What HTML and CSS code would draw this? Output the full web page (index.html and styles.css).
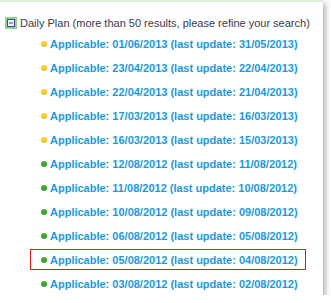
FILE: index.html
```html
<!DOCTYPE html>
<html lang="en">
<head>
  <meta charset="UTF-8">
  <title>Daily Plan</title>
  <link rel="stylesheet" href="styles.css">
</head>
<body>

<div class="panel">
  <div class="tree-head">
    <span class="toggle">
      <svg width="12" height="12" viewBox="0 0 12 12">
        <rect x="0" y="0" width="12" height="12" fill="#93d193"/>
        <rect x="2.5" y="2.5" width="7" height="7" fill="#eef0f8" stroke="#3b4a9c"/>
        <rect x="4" y="5.5" width="4" height="1" fill="#3b4a9c"/>
      </svg>
    </span>
    <span class="head-text">Daily Plan (more than 50 results, please refine your search)</span>
  </div>

  <ul class="plan-list">
    <li><span class="dot pending"></span><a href="#">Applicable: 01/06/2013 (last update: 31/05/2013)</a></li>
    <li><span class="dot pending"></span><a href="#">Applicable: 23/04/2013 (last update: 22/04/2013)</a></li>
    <li><span class="dot pending"></span><a href="#">Applicable: 22/04/2013 (last update: 21/04/2013)</a></li>
    <li><span class="dot pending"></span><a href="#">Applicable: 17/03/2013 (last update: 16/03/2013)</a></li>
    <li><span class="dot pending"></span><a href="#">Applicable: 16/03/2013 (last update: 15/03/2013)</a></li>
    <li><span class="dot done"></span><a href="#">Applicable: 12/08/2012 (last update: 11/08/2012)</a></li>
    <li><span class="dot done"></span><a href="#">Applicable: 11/08/2012 (last update: 10/08/2012)</a></li>
    <li><span class="dot done"></span><a href="#">Applicable: 10/08/2012 (last update: 09/08/2012)</a></li>
    <li><span class="dot done"></span><a href="#">Applicable: 06/08/2012 (last update: 05/08/2012)</a></li>
    <li class="selected"><span class="dot done"></span><a href="#">Applicable: 05/08/2012 (last update: 04/08/2012)</a></li>
    <li><span class="dot done"></span><a href="#">Applicable: 03/08/2012 (last update: 02/08/2012)</a></li>
  </ul>
</div>

</body>
</html>
```

FILE: styles.css
```css
body {
  margin: 0;
  background: #ffffff;
  font-family: "Liberation Sans", Arial, sans-serif;
}
.panel {
  width: 323px;
  height: 293px;
  border-top: 2px solid #dcefd9;
  background: #ffffff;
  box-shadow: 2px 3px 6px rgba(0, 0, 0, 0.35);
  box-sizing: content-box;
  overflow: hidden;
}
.tree-head {
  display: flex;
  align-items: center;
  padding: 15px 0 0 5px;
  font-size: 11px;
  color: #3a3a48;
  white-space: nowrap;
}
.toggle {
  display: flex;
  width: 12px;
  height: 12px;
  margin-right: 3px;
}
.plan-list {
  list-style: none;
  margin: 4px 0 0;
  padding: 0 0 0 30px;
}
.plan-list li {
  display: flex;
  align-items: center;
  height: 21px;
  margin-bottom: 3px;
  padding-left: 11px;
  width: 265px;
}
.plan-list li.selected {
  outline: 1px solid #e01b1b;
  outline-offset: -1px;
}
.plan-list a {
  font-size: 11px;
  font-weight: bold;
  color: #1a9ad8;
  text-decoration: none;
  white-space: nowrap;
}
.dot {
  width: 6px;
  height: 6px;
  border-radius: 50%;
  margin-right: 3px;
  flex-shrink: 0;
}
.dot.pending {
  background: radial-gradient(circle at 40% 35%, #ffd84a, #eeae00);
}
.dot.done {
  background: radial-gradient(circle at 40% 35%, #4fb041, #2a8a22);
}
```
